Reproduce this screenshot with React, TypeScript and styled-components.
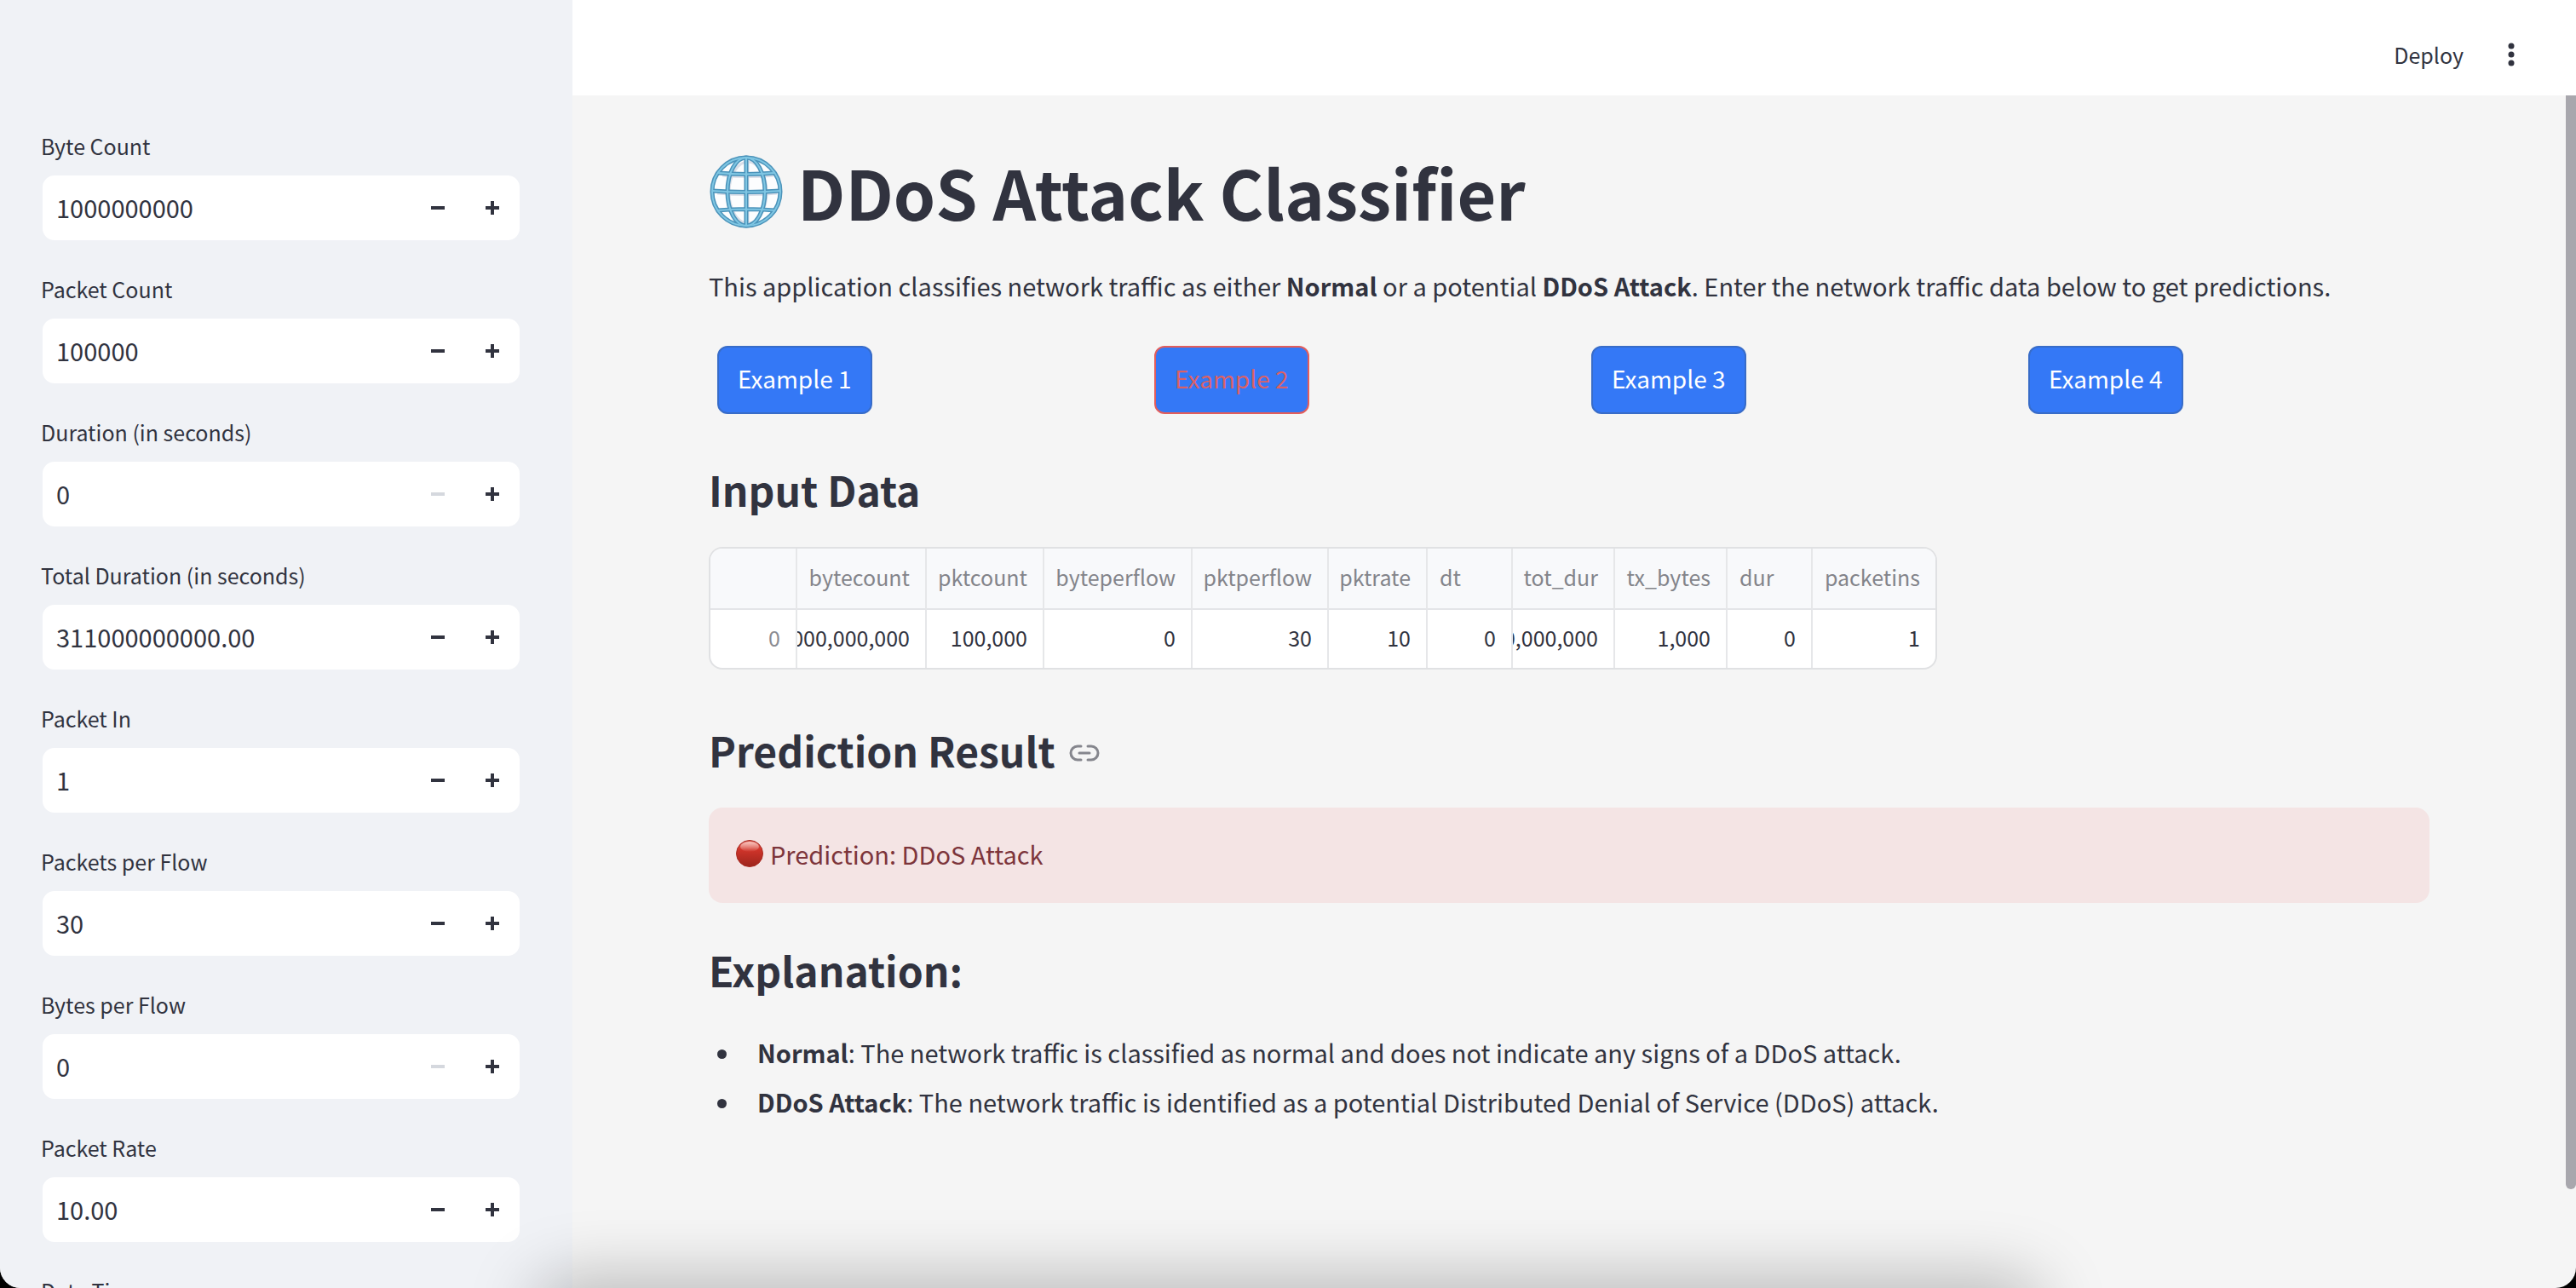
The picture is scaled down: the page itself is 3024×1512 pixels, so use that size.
import React, { useState } from 'react';
import styled, { createGlobalStyle } from 'styled-components';

const ink = '#31333f';

const GlobalStyle = createGlobalStyle`
  *, *::before, *::after { box-sizing: border-box; }
  body {
    margin: 0;
    background: #000;
    color: ${ink};
    font-family: 'Noto Sans CJK SC', 'Noto Sans', sans-serif;
    font-size: 29px;
    line-height: 52px;
  }
  button, input { font: inherit; color: inherit; }
`;

const Shell = styled.div`
  position: relative;
  display: grid;
  grid-template-columns: 672px minmax(0, 1fr);
  height: 100vh;
  overflow: hidden;
  background: #f5f5f5;
  border-radius: 0 0 24px 24px;
`;

const Sidebar = styled.aside`
  display: flex;
  flex-direction: column;
  gap: 32px;
  padding: 148px 60px 0 48px;
  background: #f0f2f6;
  overflow: hidden;
`;

const Field = styled.div`
  display: flex;
  flex-direction: column;
  flex-shrink: 0;
  gap: 10px;
`;

const FieldLabel = styled.label`
  font-size: 25px;
  line-height: 46px;
`;

const Stepper = styled.div`
  display: flex;
  height: 80px;
  border: 2px solid #f0f2f6;
  border-radius: 16px;
  background: #fff;
  overflow: hidden;
`;

const NumberBox = styled.input`
  flex: 1;
  min-width: 0;
  padding: 0 16px 2px;
  border: 0;
  outline: 0;
  background: transparent;
`;

const StepButton = styled.button`
  display: grid;
  place-items: center;
  width: 64px;
  padding: 0;
  border: 0;
  background: transparent;
  color: ${ink};
  &:disabled { color: #d5d8de; }
`;

const Page = styled.div`
  display: flex;
  flex-direction: column;
  min-width: 0;
`;

const Header = styled.header`
  display: flex;
  justify-content: flex-end;
  align-items: center;
  gap: 32px;
  height: 112px;
  padding: 16px 52px 0 0;
  background: #fff;
`;

const HeaderButton = styled.button`
  display: grid;
  place-items: center;
  min-width: 48px;
  height: 48px;
  padding: 0;
  border: 0;
  background: transparent;
  font-size: 25px;
  line-height: 46px;
`;

const Body = styled.div`
  display: flex;
  flex: 1;
  min-height: 0;
`;

const Content = styled.main`
  flex: 1;
  min-width: 0;
  padding: 61px 160px 0;
`;

const ScrollTrack = styled.div`
  width: 12px;
  margin-bottom: 116px;
  border-radius: 0 0 6px 6px;
  background: #a8a7ad;
`;

const Title = styled.h1`
  display: flex;
  align-items: center;
  gap: 16px;
  margin: 0 0 32px;
  font-size: 79px;
  line-height: 104px;
  font-weight: 700;
`;

const Intro = styled.p`
  margin: 0 0 35px;
`;

const Examples = styled.div`
  display: grid;
  grid-template-columns: repeat(4, minmax(0, 1fr));
  gap: 32px;
`;

const ExampleButton = styled.button<{ $active: boolean }>`
  justify-self: start;
  height: 80px;
  margin: 10px;
  padding: 0 22px 4px;
  border: 2px solid ${(p) => (p.$active ? '#e35d5b' : '#386cc8')};
  border-radius: 12px;
  background: #3478f6;
  color: ${(p) => (p.$active ? '#dc6166' : '#fff')};
  font-size: 28px;
  line-height: 48px;
`;

const SectionTitle = styled.h3`
  display: flex;
  align-items: center;
  gap: 16px;
  margin: 0;
  padding: 46px 0 36px;
  font-size: 48px;
  line-height: 64px;
  font-weight: 700;
`;

const AnchorLink = styled.a`
  display: flex;
  padding-top: 8px;
  color: #85868d;
`;

const TableFrame = styled.div`
  width: fit-content;
  margin-bottom: 16px;
  border: 2px solid #e0e1e3;
  border-radius: 16px;
  background: #fff;
  overflow: hidden;
`;

const Table = styled.table`
  width: 1438px;
  table-layout: fixed;
  border-collapse: separate;
  border-spacing: 0;
  font-size: 25px;
  line-height: 36px;

  th, td {
    padding: 0;
    border-right: 2px solid #e6e7e9;
    font-weight: 400;
  }
  th:last-child, td:last-child { border-right: 0; }
  thead th {
    height: 72px;
    border-bottom: 2px solid #e4e5e8;
    background: #f8f9fb;
    color: #83848a;
  }
  tbody th { color: #8b8c93; }
  tbody tr { height: 68px; }
`;

const CellText = styled.div<{ $left?: boolean }>`
  display: flex;
  justify-content: ${(p) => (p.$left ? 'flex-start' : 'flex-end')};
  padding: 0 18px 4px 14px;
  white-space: nowrap;
  overflow: hidden;
`;

const Alert = styled.div`
  display: flex;
  align-items: center;
  gap: 8px;
  padding: 28px 32px 32px;
  border-radius: 16px;
  background: #f4e4e4;
  color: #7d353b;
`;

const Notes = styled.ul`
  margin: 0;
  padding-left: 39px;
  line-height: 58px;

  li { padding-left: 18px; }
`;

const DockShade = styled.div`
  position: absolute;
  left: 21%;
  right: 21%;
  bottom: -60px;
  height: 60px;
  border-radius: 40px;
  box-shadow: 0 0 80px 8px rgba(0, 0, 0, 0.28);
  pointer-events: none;
`;

const fields = [
  { id: 'byte-count', label: 'Byte Count', value: '1000000000' },
  { id: 'packet-count', label: 'Packet Count', value: '100000' },
  { id: 'duration', label: 'Duration (in seconds)', value: '0' },
  { id: 'total-duration', label: 'Total Duration (in seconds)', value: '311000000000.00' },
  { id: 'packet-in', label: 'Packet In', value: '1' },
  { id: 'packets-per-flow', label: 'Packets per Flow', value: '30' },
  { id: 'bytes-per-flow', label: 'Bytes per Flow', value: '0' },
  { id: 'packet-rate', label: 'Packet Rate', value: '10.00' },
  { id: 'date-time', label: 'Date Time', value: '0' },
];

const columns = [
  { name: 'bytecount', value: '1,000,000,000', width: 152 },
  { name: 'pktcount', value: '100,000', width: 138 },
  { name: 'byteperflow', value: '0', width: 174 },
  { name: 'pktperflow', value: '30', width: 160 },
  { name: 'pktrate', value: '10', width: 116 },
  { name: 'dt', value: '0', width: 100, left: true },
  { name: 'tot_dur', value: '311,000,000,000', width: 120 },
  { name: 'tx_bytes', value: '1,000', width: 132 },
  { name: 'dur', value: '0', width: 100, left: true },
  { name: 'packetins', value: '1', width: 144 },
];

const examples = ['Example 1', 'Example 2', 'Example 3', 'Example 4'];

function GlobeIcon() {
  const lines = (
    <>
      <ellipse cx="44" cy="44" rx="22" ry="40" />
      <path d="M44 4v80M4 43q40 3 80 0M11 22q33 3 66 0M10 66q34-3 68 0" />
      <circle cx="44" cy="44" r="40" />
    </>
  );
  return (
    <svg width="88" height="88" viewBox="0 0 88 88" fill="none" aria-hidden="true">
      <circle cx="44" cy="44" r="40" fill="#fcfdfe" />
      <g stroke="#d9dee8" strokeWidth="3" transform="translate(2 3)">
        <ellipse cx="44" cy="42" rx="22" ry="36" />
        <path d="M44 6v72M8 43q36 3 70 0M14 22q30 3 60 0" />
      </g>
      <g stroke="#4b93ba" strokeWidth="5">{lines}</g>
      <g stroke="#7fc6e3" strokeWidth="2">{lines}</g>
    </svg>
  );
}

function RedCircleIcon() {
  return (
    <svg width="32" height="32" viewBox="0 0 32 32" aria-hidden="true">
      <defs>
        <linearGradient id="ball" x1="0" y1="0" x2="0" y2="1">
          <stop offset="0" stopColor="#e0665c" />
          <stop offset="0.35" stopColor="#d0342a" />
          <stop offset="1" stopColor="#9c241c" />
        </linearGradient>
        <linearGradient id="gloss" x1="0" y1="0" x2="0" y2="1">
          <stop offset="0" stopColor="#f8c4bd" />
          <stop offset="1" stopColor="#f8c4bd" stopOpacity="0" />
        </linearGradient>
      </defs>
      <circle cx="16" cy="16" r="15.5" fill="url(#ball)" stroke="#a82a22" />
      <ellipse cx="16" cy="8" rx="11" ry="6" fill="url(#gloss)" />
    </svg>
  );
}

function LinkIcon() {
  return (
    <svg width="36" height="20" viewBox="0 0 36 20" fill="none" stroke="currentColor" strokeWidth="3" strokeLinecap="round" aria-hidden="true">
      <path d="M14 2H10a8 8 0 0 0 0 16H14M22 2h4a8 8 0 0 1 0 16H22M12 10h12" />
    </svg>
  );
}

function NumberField({ id, label, value }: { id: string; label: string; value: string }) {
  const [text, setText] = useState(value);
  const decimals = value.includes('.') ? 2 : 0;
  const step = (by: number) => setText((Number(text) + by).toFixed(decimals));
  return (
    <Field>
      <FieldLabel htmlFor={id}>{label}</FieldLabel>
      <Stepper>
        <NumberBox id={id} inputMode="decimal" value={text} onChange={(e) => setText(e.target.value)} />
        <StepButton aria-label={`Decrease ${label}`} disabled={Number(text) <= 0} onClick={() => step(-1)}>
          <svg width="16" height="16" viewBox="0 0 16 16" fill="currentColor"><path d="M0 6h16v4H0z" /></svg>
        </StepButton>
        <StepButton aria-label={`Increase ${label}`} onClick={() => step(1)}>
          <svg width="16" height="16" viewBox="0 0 16 16" fill="currentColor"><path d="M6 0h4v6h6v4h-6v6H6v-6H0V6h6z" /></svg>
        </StepButton>
      </Stepper>
    </Field>
  );
}

export default function App() {
  const [active, setActive] = useState('Example 2');
  return (
    <>
      <GlobalStyle />
      <Shell>
        <Sidebar>
          {fields.map((f) => <NumberField key={f.id} {...f} />)}
        </Sidebar>
        <Page>
          <Header>
            <HeaderButton>Deploy</HeaderButton>
            <HeaderButton aria-label="Main menu">
              <svg width="8" height="28" viewBox="0 0 8 28" fill="currentColor">
                <circle cx="4" cy="4" r="3.5" />
                <circle cx="4" cy="14" r="3.5" />
                <circle cx="4" cy="24" r="3.5" />
              </svg>
            </HeaderButton>
          </Header>
          <Body>
            <Content>
              <Title><GlobeIcon />DDoS Attack Classifier</Title>
              <Intro>
                This application classifies network traffic as either <strong>Normal</strong> or a potential{' '}
                <strong>DDoS Attack</strong>. Enter the network traffic data below to get predictions.
              </Intro>
              <Examples>
                {examples.map((name) => (
                  <ExampleButton key={name} $active={name === active} onClick={() => setActive(name)}>{name}</ExampleButton>
                ))}
              </Examples>
              <SectionTitle>Input Data</SectionTitle>
              <TableFrame>
                <Table>
                  <colgroup>
                    <col width={102} />
                    {columns.map((c) => <col key={c.name} width={c.width} />)}
                  </colgroup>
                  <thead>
                    <tr>
                      <th aria-label="Row" />
                      {columns.map((c) => (
                        <th key={c.name} scope="col"><CellText $left={c.left}>{c.name}</CellText></th>
                      ))}
                    </tr>
                  </thead>
                  <tbody>
                    <tr>
                      <th scope="row"><CellText>0</CellText></th>
                      {columns.map((c) => <td key={c.name}><CellText>{c.value}</CellText></td>)}
                    </tr>
                  </tbody>
                </Table>
              </TableFrame>
              <SectionTitle id="prediction-result">
                Prediction Result
                <AnchorLink href="#prediction-result" aria-label="Link to Prediction Result"><LinkIcon /></AnchorLink>
              </SectionTitle>
              <Alert role="alert"><RedCircleIcon />Prediction: DDoS Attack</Alert>
              <SectionTitle>Explanation:</SectionTitle>
              <Notes>
                <li><strong>Normal</strong>: The network traffic is classified as normal and does not indicate any signs of a DDoS attack.</li>
                <li><strong>DDoS Attack</strong>: The network traffic is identified as a potential Distributed Denial of Service (DDoS) attack.</li>
              </Notes>
            </Content>
            <ScrollTrack />
          </Body>
        </Page>
        <DockShade />
      </Shell>
    </>
  );
}
